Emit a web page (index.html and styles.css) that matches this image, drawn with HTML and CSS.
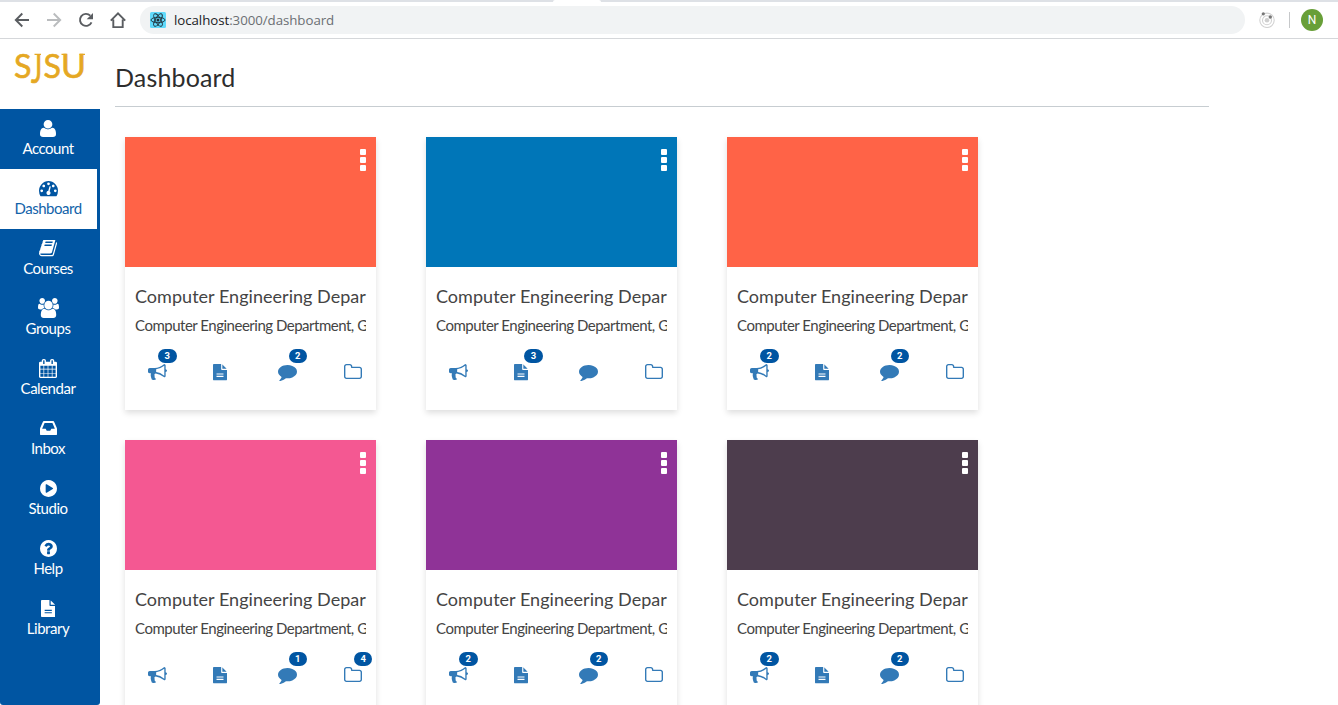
FILE: index.html
```html
<!DOCTYPE html>
<html lang="en">
<head>
<meta charset="utf-8">
<title>Dashboard</title>
<link rel="stylesheet" href="styles.css">
</head>
<body>
<svg class="defs" aria-hidden="true">
  <symbol id="user" viewBox="192 128 1408 1536" preserveAspectRatio="none"><path d="M1600 1405q0 120-73 189.5t-194 69.5h-874q-121 0-194-69.5t-73-189.5q0-53 3.5-103.5t14-109 26.5-108.5 43-97.500 62-81 85.500-53.500 111.500-20q9 0 42 21.500t74.500 48 108 48 133.500 21.500 133.500-21.500 108-48 74.500-48 42-21.500q61 0 111.500 20t85.500 53.500 62 81 43 97.500 26.500 108.500 14 109 3.500 103.500zm-320-893q0 159-112.500 271.500t-271.500 112.500-271.500-112.500-112.500-271.500 112.500-271.500 271.500-112.500 271.500 112.500 112.500 271.500z"/></symbol>
  <symbol id="gauge" viewBox="0 256 1792 1408" preserveAspectRatio="none"><path d="M384 1152q0-53-37.500-90.500t-90.500-37.500-90.500 37.500-37.500 90.500 37.500 90.500 90.500 37.500 90.500-37.500 37.500-90.500zm192-448q0-53-37.500-90.500t-90.500-37.500-90.500 37.500-37.500 90.500 37.500 90.500 90.500 37.500 90.500-37.500 37.500-90.500zm428 481l101-382q6-26-7.500-48.500t-38.500-29.500-48 6.500-30 39.500l-101 382q-60 5-107 43.500t-63 98.500q-20 77 20 146t117 89 146-20 89-117q16-60-6-117t-72-91zm660-33q0-53-37.500-90.500t-90.500-37.500-90.500 37.500-37.500 90.500 37.500 90.500 90.500 37.500 90.500-37.500 37.500-90.500zm-640-640q0-53-37.500-90.500t-90.500-37.500-90.500 37.500-37.500 90.500 37.500 90.500 90.500 37.500 90.500-37.500 37.500-90.500zm448 192q0-53-37.500-90.500t-90.500-37.500-90.500 37.500-37.500 90.500 37.500 90.500 90.500 37.500 90.500-37.500 37.500-90.500zm320 448q0 261-141 483-19 29-54 29h-1402q-35 0-54-29-141-221-141-483 0-182 71-348t191-286 286-191 348-71 348 71 286 191 191 286 71 348z"/></symbol>
  <symbol id="book" viewBox="60 256 1670 1408" preserveAspectRatio="none"><path d="M1703 478q40 57 18 129l-275 906q-19 64-76.500 107.500t-122.500 43.500h-923q-77 0-148.500-53.500t-99.500-131.500q-24-67-2-127 0-4 3-27t4-37q1-8-3-21.500t-3-19.500q2-11 8-21t16.500-23.500 16.500-23.500q23-38 45-91.500t30-91.500q3-10 .5-30t-.5-28q3-11 17-28t17-23q21-36 42-92t25-90q1-9-2.500-32t.5-28q4-13 22-30.500t22-22.500q19-26 42.500-84.500t27.500-96.500q1-8-3-25.500t-2-26.500q2-8 9-18t18-23 17-21q8-12 16.500-30.500t15-35 16-36 19.500-32 26.500-23.500 36-11.500 47.500 5.500l-1 3q38-9 51-9h761q74 0 114 56t18 130l-274 906q-36 119-71.500 153.500t-128.500 34.500h-869q-27 0-38 15-11 16-1 43 24 70 144 70h923q29 0 56-15.500t35-41.500l300-987q7-22 5-57 38 15 59 43zm-1064 2q-4 13 2 22.500t20 9.500h608q13 0 25.500-9.500t16.500-22.500l21-64q4-13-2-22.500t-20-9.500h-608q-13 0-25.500 9.500t-16.500 22.500zm-83 256q-4 13 2 22.500t20 9.500h608q13 0 25.500-9.500t16.500-22.500l21-64q4-13-2-22.500t-20-9.500h-608q-13 0-25.500 9.500t-16.500 22.500z"/></symbol>
  <symbol id="users" viewBox="64 0 1920 1792" preserveAspectRatio="none"><path d="M657 896q-162 5-265 128h-134q-82 0-138-40.500t-56-118.500q0-353 124-353 6 0 43.500 21t97.500 42.500 119 21.500q67 0 133-23-5 37-5 66 0 159 81 256zm1071 637q0 120-73 189.500t-194 69.500h-874q-121 0-194-69.500t-73-189.500q0-53 3.500-103.500t14-109 26.500-108.500 43-97.500 62-81 85.500-53.500 111.500-20q10 0 43 21.500t73 48 107 48 135 21.500 135-21.500 107-48 73-48 43-21.500q61 0 111.500 20t85.500 53.500 62 81 43 97.500 26.500 108.500 14 109 3.500 103.500zm-1024-1277q0 106-75 181t-181 75-181-75-75-181 75-181 181-75 181 75 75 181zm704 384q0 159-112.500 271.500t-271.500 112.500-271.500-112.500-112.500-271.500 112.500-271.500 271.500-112.500 271.500 112.500 112.500 271.500zm576 225q0 78-56 118.500t-138 40.500h-134q-103-123-265-128 81-97 81-256 0-29-5-66 66 23 133 23 59 0 119-21.500t97.500-42.500 43.500-21q124 0 124 353zm-128-609q0 106-75 181t-181 75-181-75-75-181 75-181 181-75 181 75 75 181z"/></symbol>
  <symbol id="calendar" viewBox="64 0 1664 1792" preserveAspectRatio="none"><path d="M192 1664h288v-288h-288v288zm352 0h320v-288h-320v288zm-352-352h288v-320h-288v320zm352 0h320v-320h-320v320zm-352-384h288v-288h-288v288zm736 736h320v-288h-320v288zm-384-736h320v-288h-320v288zm768 736h288v-288h-288v288zm-384-352h320v-320h-320v320zm-352-864v-288q0-13-9.500-22.500t-22.500-9.500h-64q-13 0-22.500 9.500t-9.500 22.500v288q0 13 9.500 22.500t22.500 9.500h64q13 0 22.500-9.500t9.500-22.500zm736 864h288v-320h-288v320zm-384-384h320v-288h-320v288zm384 0h288v-288h-288v288zm32-480v-288q0-13-9.500-22.500t-22.500-9.500h-64q-13 0-22.500 9.500t-9.500 22.500v288q0 13 9.500 22.500t22.500 9.500h64q13 0 22.500-9.500t9.500-22.500zm384-64v1280q0 52-38 90t-90 38h-1408q-52 0-90-38t-38-90v-1280q0-52 38-90t90-38h128v-96q0-66 47-113t113-47h64q66 0 113 47t47 113v96h384v-96q0-66 47-113t113-47h64q66 0 113 47t47 113v96h128q52 0 90 38t38 90z"/></symbol>
  <symbol id="inbox" viewBox="128 256 1536 1280" preserveAspectRatio="none"><path d="M1151 960h316q-1-3-2.500-8.500t-2.500-7.500l-212-496h-708l-212 496q-1 3-2.500 8.500t-2.500 7.500h316l95 192h320zm513 30v482q0 26-19 45t-45 19h-1408q-26 0-45-19t-19-45v-482q0-62 25-123l238-552q10-25 36.500-42t52.500-17h832q26 0 52.500 17t36.500 42l238 552q25 61 25 123z"/></symbol>
  <symbol id="play" viewBox="128 128 1536 1536" preserveAspectRatio="none"><path d="M896 128q209 0 385.500 103t279.500 279.500 103 385.500-103 385.500-279.500 279.500-385.500 103-385.500-103-279.500-279.500-103-385.500 103-385.500 279.500-279.500 385.500-103zm384 823q32-18 32-55t-32-55l-544-320q-31-19-64-1-32 19-32 56v640q0 37 32 56 16 8 32 8 17 0 32-9z"/></symbol>
  <symbol id="help" viewBox="128 128 1536 1536" preserveAspectRatio="none"><path d="M1024 1376v-192q0-14-9-23t-23-9h-192q-14 0-23 9t-9 23v192q0 14 9 23t23 9h192q14 0 23-9t9-23zm256-672q0-88-55.500-163t-138.500-116-170-41q-243 0-371 213-15 24 8 42l132 100q7 6 19 6 16 0 25-12 53-68 86-92 34-24 86-24 48 0 85.500 26t37.500 59q0 38-20 61t-68 45q-63 28-115.500 86.500t-52.500 125.500v36q0 14 9 23t23 9h192q14 0 23-9t9-23q0-19 21.500-49.500t54.500-49.500q32-18 49-28.500t46-35 44.500-48 28-60.500 12.500-81zm384 192q0 209-103 385.500t-279.500 279.500-385.500 103-385.500-103-279.500-279.500-103-385.500 103-385.500 279.500-279.500 385.500-103 385.500 103 279.500 279.500 103 385.500z"/></symbol>
  <symbol id="file" viewBox="128 0 1536 1792" preserveAspectRatio="none"><path d="M1596 476q14 14 28 36h-472v-472q22 14 36 28zm-476 164h544v1056q0 40-28 68t-68 28h-1344q-40 0-68-28t-28-68v-1600q0-40 28-68t68-28h800v544q0 40 28 68t68 28zm160 736v-64q0-14-9-23t-23-9h-704q-14 0-23 9t-9 23v64q0 14 9 23t23 9h704q14 0 23-9t9-23zm0-256v-64q0-14-9-23t-23-9h-704q-14 0-23 9t-9 23v64q0 14 9 23t23 9h704q14 0 23-9t9-23z"/></symbol>
  <symbol id="comment" viewBox="0 256 1792 1536" preserveAspectRatio="none"><path d="M1792 896q0 174-120 321.500t-326 233-450 85.500q-70 0-145-8-198 175-460 242-49 14-114 22-17 2-30.500-9t-17.500-29v-1q-3-4-.5-12t2-10 4.500-9.500l6-9 7-8.500 8-9q7-8 31-34.500t34.500-38 31-39.500 32.500-51 27-59 26-76q-157-89-247.500-220t-90.500-281q0-130 71-248.500t191-204.500 286-136.500 348-50.500q244 0 450 85.500t326 233 120 321.500z"/></symbol>
  <symbol id="bullhorn" viewBox="0 128 1792 1536" preserveAspectRatio="none"><path d="M1664 640q53 0 90.500 37.500t37.500 90.500-37.500 90.500-90.500 37.500v384q0 52-38 90t-90 38q-417-347-812-380-58 19-91 66t-31 100.500 40 92.500q-20 33-23 65.500t6 58 33.500 55 48 50 61.500 50.500q-29 58-111.500 83t-168.500 11.500-132-55.500q-7-23-29.500-87.500t-32-94.500-23-89-15-101 3.500-98.500 22-110.500h-122q-66 0-113-47t-47-113v-192q0-66 47-113t113-47h480q435 0 896-384 52 0 90 38t38 90v384zm-128 604v-954q-394 302-768 343v270q377 42 768 341z"/></symbol>
  <symbol id="folder" viewBox="64 128 1664 1408" preserveAspectRatio="none"><path d="M1600 1312v-704q0-40-28-68t-68-28h-704q-40 0-68-28t-28-68v-64q0-40-28-68t-68-28h-320q-40 0-68 28t-28 68v960q0 40 28 68t68 28h1216q40 0 68-28t28-68zm128-704v704q0 92-66 158t-158 66h-1216q-92 0-158-66t-66-158v-960q0-92 66-158t158-66h320q92 0 158 66t66 158v32h672q92 0 158 66t66 158z"/></symbol>
</svg>

<header class="browser">
  <div class="tabstrip"><span class="tab"></span></div>
  <div class="toolbar">
    <svg class="nav-icon" viewBox="0 0 16 16"><path d="M15 8H2M8.300 1.500 1.800 8l6.500 6.500"/></svg>
    <svg class="nav-icon nav-off" viewBox="0 0 16 16"><path d="M1 8h13M7.700 1.500 14.200 8l-6.500 6.500"/></svg>
    <svg class="nav-icon" viewBox="0 0 16 16"><path d="M13.500 10.300A6 6 0 1 1 12.300 3.700"/><path class="solid" d="M15 1v6.300H8.700z"/></svg>
    <svg class="nav-icon" viewBox="0 0 16 16"><path d="M.8 8.700 8 1.400l7.200 7.300M3.300 7.500v7.600h9.400V7.500"/></svg>
    <div class="address">
      <svg class="favicon" viewBox="0 0 16 16"><rect width="16" height="16" rx="1.500"/><g><ellipse cx="8" cy="8" rx="7" ry="2.700"/><ellipse cx="8" cy="8" rx="7" ry="2.700" transform="rotate(60 8 8)"/><ellipse cx="8" cy="8" rx="7" ry="2.700" transform="rotate(120 8 8)"/></g><circle cx="8" cy="8" r="1.500"/></svg>
      <span class="url"><b>localhost</b>:3000/dashboard</span>
    </div>
    <svg class="extension" viewBox="0 0 16 16"><g><circle cx="8" cy="8.300" r="7.200"/><circle cx="8" cy="8.300" r="4.500"/></g><circle class="core" cx="8" cy="8.300" r="2.300"/><circle class="dot" cx="4.300" cy="1.800" r="1.600"/><circle class="dot" cx="11.300" cy="5" r="1.700"/></svg>
    <span class="divider"></span>
    <span class="avatar">N</span>
  </div>
</header>

<div class="app">
  <aside class="sidebar">
    <div class="logo">
      <svg viewBox="0 0 100 70"><text x="14" y="39" textLength="17.500" lengthAdjust="spacingAndGlyphs">S</text><text transform="translate(31 43.500) scale(.8 1.170)">J</text><text x="43.500" y="39" textLength="17.500" lengthAdjust="spacingAndGlyphs">S</text><text x="61" y="39" textLength="25" lengthAdjust="spacingAndGlyphs">U</text><path d="M34.500 15.400h6.500M61.500 15.400h5M79.500 15.400h5.500"/></svg>
    </div>
    <nav class="menu">
      <a class="item"><span class="glyph"><svg class="i-user"><use href="#user"/></svg></span><span class="label">Account</span></a>
      <a class="item active"><span class="glyph"><svg class="i-gauge"><use href="#gauge"/></svg></span><span class="label">Dashboard</span></a>
      <a class="item"><span class="glyph"><svg class="i-book"><use href="#book"/></svg></span><span class="label">Courses</span></a>
      <a class="item"><span class="glyph"><svg class="i-users"><use href="#users"/></svg></span><span class="label">Groups</span></a>
      <a class="item"><span class="glyph"><svg class="i-calendar"><use href="#calendar"/></svg></span><span class="label">Calendar</span></a>
      <a class="item"><span class="glyph"><svg class="i-inbox"><use href="#inbox"/></svg></span><span class="label">Inbox</span></a>
      <a class="item"><span class="glyph"><svg class="i-round"><use href="#play"/></svg></span><span class="label">Studio</span></a>
      <a class="item"><span class="glyph"><svg class="i-round"><use href="#help"/></svg></span><span class="label">Help</span></a>
      <a class="item"><span class="glyph"><svg class="i-file"><use href="#file"/></svg></span><span class="label">Library</span></a>
    </nav>
  </aside>
  <main class="content">
    <h1 class="title">Dashboard</h1>
    <div class="cards" id="cards"></div>
  </main>
</div>
<script src="cards.js"></script>
</body>
</html>
```

FILE: styles.css
```css
* { box-sizing: border-box; }
body { margin: 0; height: 705px; overflow: hidden; background: #fff; font-family: Lato, sans-serif; display: flex; flex-direction: column; }
.defs { display: none; }

.browser { flex: none; height: 39px; border-bottom: 1px solid #d5d7da; }
.tabstrip { height: 2px; background: #dee1e6; padding-left: 553px; }
.tab { display: block; width: 48px; height: 2px; background: #fff; border-radius: 2px 2px 0 0; }
.toolbar { display: flex; align-items: center; height: 36px; padding: 0 15px 0 14px; }
.nav-icon { width: 16px; height: 16px; margin-right: 16px; fill: none; stroke: #5a5d61; stroke-width: 1.9; flex: none; }
.nav-icon .solid { fill: #5a5d61; stroke: none; }
.nav-off { stroke: #babcbe; }
.address { display: flex; align-items: center; width: 1105px; height: 28px; margin-left: -2px; padding-left: 10px; border-radius: 14px; background: #f1f3f4; }
.favicon { width: 16px; height: 16px; margin-right: 8px; fill: #61dafb; }
.favicon g { fill: none; stroke: #20303a; stroke-width: .9; }
.favicon circle { fill: #20303a; }
.url { font: 13.3px "Open Sans", sans-serif; color: #6b6f73; letter-spacing: -.06px; }
.url b { font-weight: 400; color: #202124; }
.extension { width: 16px; height: 16px; margin-left: 14px; flex: none; }
.extension g { fill: none; stroke: #d2d2d2; stroke-width: 1.1; }
.core { fill: #cfcfcf; }
.dot { fill: #777; }
.divider { width: 1px; height: 16px; margin: 0 11px 0 14px; background: #c6c8ca; }
.avatar { width: 22px; height: 22px; border-radius: 50%; background: #689f38; color: #fff; font: 12px/22px Roboto, sans-serif; text-align: center; }

.app { flex: 1; display: flex; min-height: 0; }
.sidebar { width: 100px; flex: none; display: flex; flex-direction: column; background: #0055a2; border-radius: 0 0 3px 3px; }
.logo { height: 70px; background: #fff; }
.logo svg { display: block; width: 100px; height: 70px; fill: #e5a823; stroke: #e5a823; stroke-width: .6; font: 33px Lato, sans-serif; }
.logo path { stroke-width: 1.4; }
.menu { width: 97px; }
.item { display: flex; flex-direction: column; align-items: center; height: 60px; padding: 9px 1px 0 0; color: #fff; }
.active { background: #fff; color: #0055a2; }
.active .label { color: #1263a9; }
.glyph { display: flex; align-items: flex-end; height: 20px; }
.glyph svg { fill: currentColor; margin-bottom: 1px; }
.label { font-size: 15px; letter-spacing: -.48px; line-height: 20px; }
.i-user { width: 16px; height: 17px; }
.glyph .i-gauge { width: 19px; height: 15.5px; margin-bottom: 1.5px; }
.glyph .i-book { width: 18px; height: 16.5px; margin-bottom: 1.5px; }
.glyph .i-users { width: 21px; height: 20px; margin-bottom: 0; }
.glyph .i-calendar { width: 18px; height: 19px; margin-bottom: 0; }
.glyph .i-inbox { width: 17px; height: 14px; margin-bottom: 3px; }
.i-round { width: 17px; height: 17px; }
.i-file { width: 14.5px; height: 17px; }

.content { flex: 1; min-width: 0; padding-left: 15px; }
.title { width: 1094px; height: 68px; margin: 0; padding-top: 20px; border-bottom: 1px solid #c7cdd1; font-size: 25px; letter-spacing: .15px; line-height: 36px; font-weight: 400; color: #2d2d2d; }
.cards { display: grid; grid-template-columns: repeat(3, 251px); grid-auto-rows: 273px; gap: 30px 50px; padding: 30px 0 0 10px; }
.card { background: #fff; box-shadow: 0 3px 6px rgba(0, 0, 0, .13); }
.cover { display: flex; flex-direction: column; align-items: flex-end; gap: 2px; height: 130px; padding: 12px 10px; }
.cover i { width: 6px; height: 6px; border-radius: 1px; background: #fff; }
.coral { background: #ff6347; }
.blue { background: #0076b8; }
.pink { background: #f45892; }
.purple { background: #8f3397; }
.plum { background: #4d3d4d; }
.text { padding: 16px 10px 0; color: #444; }
.name, .dept { width: 232px; overflow: hidden; white-space: nowrap; }
.name { font-size: 18px; letter-spacing: .03px; line-height: 26px; }
.dept { width: 231px; font-size: 15px; letter-spacing: -.49px; line-height: 20px; margin-top: 6px; }
.actions { display: grid; grid-template-columns: repeat(4, 65.3px); padding: 29px 0 0 23px; width: 251px; }
.action { position: relative; height: 17px; }
.action svg { display: block; fill: #337ab7; }
.a-bullhorn { width: 19px; height: 16px; }
.a-file { width: 14px; height: 16.500px; }
.action .a-comment { width: 19px; height: 16px; margin: 1px 0 0 -.5px; }
.a-folder { width: 18px; height: 15px; }
.badge { position: absolute; left: 10px; top: -15px; width: 18.5px; height: 14px; border-radius: 7px; background: #0055a2; color: #fff; font: 700 9.5px/14px Roboto, sans-serif; text-align: center; }
```

FILE: cards.js
```js
// Badge counts follow the order of the icons: announcements, assignments, discussions, files.
const courses = [
  { color: 'coral', counts: [3, 0, 2, 0] },
  { color: 'blue', counts: [0, 3, 0, 0] },
  { color: 'coral', counts: [2, 0, 2, 0] },
  { color: 'pink', counts: [0, 0, 1, 4] },
  { color: 'purple', counts: [2, 0, 2, 0] },
  { color: 'plum', counts: [2, 0, 2, 0] }
];
const icons = ['bullhorn', 'file', 'comment', 'folder'];

document.getElementById('cards').innerHTML = courses.map(course => `
  <article class="card">
    <div class="cover ${course.color}"><i></i><i></i><i></i></div>
    <div class="text">
      <div class="name">Computer Engineering Depar</div>
      <div class="dept">Computer Engineering Department, G</div>
    </div>
    <div class="actions">${icons.map((icon, i) => `
      <a class="action"><svg class="a-${icon}"><use href="#${icon}"/></svg>${
        course.counts[i] ? `<span class="badge">${course.counts[i]}</span>` : ''}</a>`).join('')}
    </div>
  </article>`).join('');
```
